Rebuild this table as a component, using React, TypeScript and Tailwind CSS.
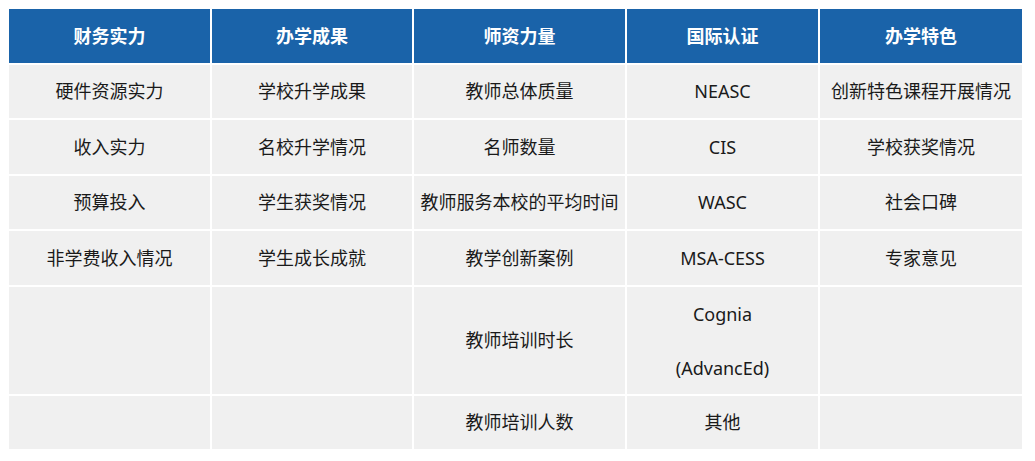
import React from "react";

const headers = ["财务实力", "办学成果", "师资力量", "国际认证", "办学特色"];

const rows: (React.ReactNode)[][] = [
  ["硬件资源实力", "学校升学成果", "教师总体质量", "NEASC", "创新特色课程开展情况"],
  ["收入实力", "名校升学情况", "名师数量", "CIS", "学校获奖情况"],
  ["预算投入", "学生获奖情况", "教师服务本校的平均时间", "WASC", "社会口碑"],
  ["非学费收入情况", "学生成长成就", "教学创新案例", "MSA-CESS", "专家意见"],
  [
    "",
    "",
    "教师培训时长",
    <div className="flex flex-col items-center">
      <div className="leading-[54px]">Cognia</div>
      <div className="leading-[54px]">(AdvancEd)</div>
    </div>,
    "",
  ],
  ["", "", "教师培训人数", "其他", ""],
];

export default function App() {
  return (
    <div
      className="w-[1035px] h-[461px] bg-white pt-[9px] pl-[9px]"
      style={{ fontFamily: "'Noto Sans', 'Noto Sans CJK SC', sans-serif" }}
    >
      <div className="grid w-[1013px] grid-cols-[201px_200px_211px_191px_202px] grid-rows-[54px_53px_54px_53px_54px_107px_53px] gap-[2px] bg-white">
        {headers.map((h) => (
          <div
            key={h}
            className="flex items-center justify-center bg-[#1a63a9] text-[18px] font-bold text-white"
          >
            {h}
          </div>
        ))}
        {rows.map((r, i) =>
          r.map((c, j) => (
            <div
              key={`${i}-${j}`}
              className="flex items-center justify-center bg-[#f0f0f0] text-[18px] text-[#1a1a1a] whitespace-nowrap"
            >
              {c}
            </div>
          ))
        )}
      </div>
    </div>
  );
}
